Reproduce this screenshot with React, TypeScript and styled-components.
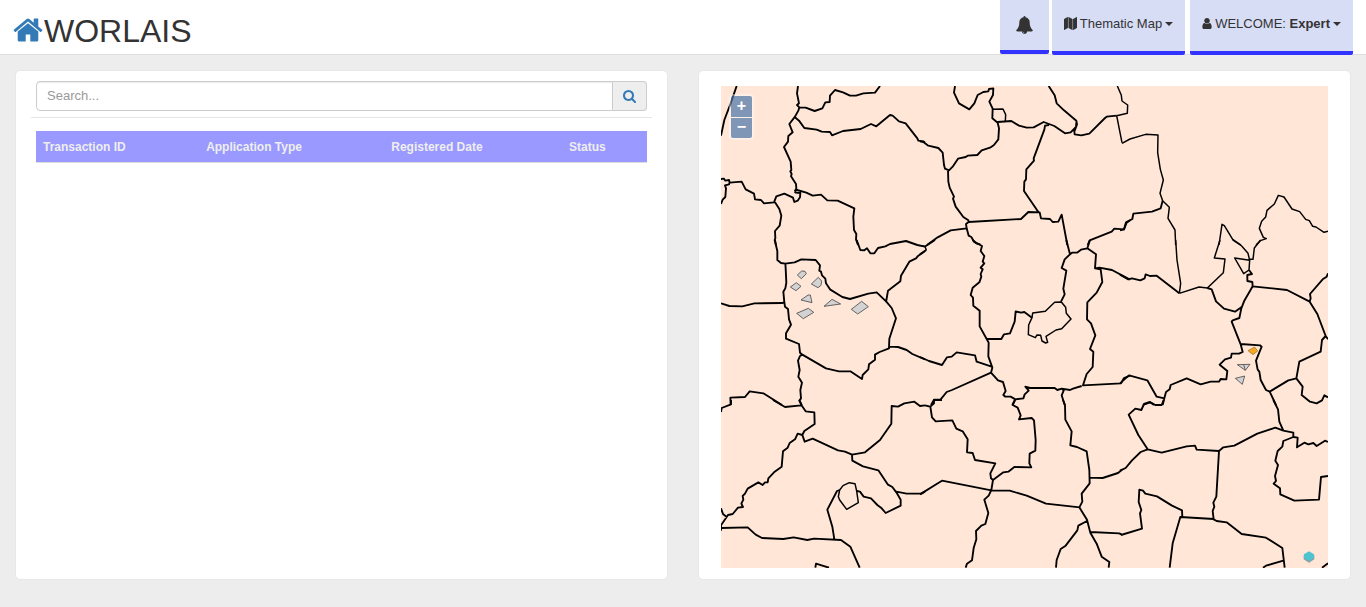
import React from "react";
import styled, { createGlobalStyle } from "styled-components";

const GlobalStyle = createGlobalStyle`
  *, *::before, *::after { box-sizing: border-box; }
  body {
    margin: 0;
    background: #ededed;
    color: #333;
    font: 13px/18px "Liberation Sans", Arial, Helvetica, sans-serif;
  }
  button, input { font: inherit; color: inherit; }
`;

const Header = styled.header`
  display: flex;
  align-items: flex-start;
  justify-content: space-between;
  height: 55px;
  padding: 0 13px;
  background: #fff;
  box-shadow: inset 0 -1px #dedede;
`;

const Brand = styled.h1`
  display: flex;
  gap: 1px;
  margin: 0;
  padding-top: 14px;
  font-size: 32px;
  line-height: 34px;
  font-weight: 400;
`;

const HomeLink = styled.a`
  display: block;
  height: 32px;
  color: #337ab7;
`;

const Icon = styled.svg`
  display: block;
  flex: none;
  fill: currentColor;
`;

const Nav = styled.nav`
  display: flex;
  align-items: flex-start;
`;

const NavButton = styled.button<{ $gap: number; $compact?: boolean }>`
  display: flex;
  align-items: flex-start;
  gap: 3px;
  height: ${(p) => (p.$compact ? 54 : 55)}px;
  margin: 0 0 0 ${(p) => p.$gap}px;
  padding: ${(p) => (p.$compact ? "16px" : "15px 12px")};
  border: 0;
  border-bottom: 4px solid #3333ff;
  border-radius: 0 0 2px 2px;
  background: #d8ddf6;
  white-space: nowrap;
  cursor: pointer;

  ${Icon} {
    margin-top: ${(p) => (p.$compact ? 0 : 2)}px;
  }
`;

const Caret = styled.span`
  margin-top: 7px;
  border: 4px solid transparent;
  border-top-color: currentColor;
  border-bottom: 0;
`;

const Main = styled.main`
  display: grid;
  grid-template-columns: minmax(0, 1fr) minmax(0, 1fr);
  gap: 30px;
  padding: 15px 15px 27px;
`;

const Panel = styled.section<{ $map?: boolean }>`
  padding: ${(p) => (p.$map ? "15px 22px 11px" : "10px 15px")};
  border: 1px solid #e7e7ec;
  border-radius: 5px;
  background: #fff;
`;

const SearchForm = styled.form`
  display: flex;
  margin: 0;
  padding: 0 5px 6px;
  border-bottom: 1px solid #e7e7ea;
`;

const SearchInput = styled.input`
  flex: 1;
  min-width: 0;
  height: 30px;
  padding: 0 10px 2px;
  border: 1px solid #ccc;
  border-radius: 4px 0 0 4px;
  box-shadow: inset 0 1px 1px rgba(0, 0, 0, 0.08);
  outline: 0;
  &::placeholder { color: #999; opacity: 1; }
`;

const SearchButton = styled.button`
  display: flex;
  align-items: center;
  justify-content: center;
  width: 34px;
  height: 30px;
  padding: 0;
  border: 1px solid #ccc;
  border-left: 0;
  border-radius: 0 4px 4px 0;
  background: #eee;
  color: #337ab7;
  cursor: pointer;
`;

const TableWrap = styled.div`
  padding: 13px 5px 0;
`;

const Table = styled.table`
  width: 100%;
  table-layout: fixed;
  border-collapse: separate;
  border-spacing: 0;
  font-size: 12px;
`;

const HeadCell = styled.th<{ $width?: string }>`
  width: ${(p) => p.$width || "auto"};
  height: 32px;
  padding: 0 7px;
  border-bottom: 1px solid #ddd;
  background: #9999ff;
  background-clip: padding-box;
  color: #eee;
  font-weight: 700;
  text-align: left;
`;

const MapView = styled.div`
  position: relative;
  background: #ffe6d7;
`;

const MapCanvas = styled.svg`
  display: block;
  width: 100%;
  height: auto;
`;

const ZoomBox = styled.div`
  position: absolute;
  top: 8px;
  left: 8px;
  display: flex;
  flex-direction: column;
  gap: 1px;
  padding: 2px;
  border-radius: 4px;
  background: rgba(255, 255, 255, 0.4);
`;

const ZoomButton = styled.button<{ $last?: boolean }>`
  width: 21px;
  height: ${(p) => (p.$last ? 20 : 21)}px;
  padding: 0 0 2px;
  border: 0;
  border-radius: ${(p) => (p.$last ? "0 0 2px 2px" : "2px 2px 0 0")};
  background: rgba(0, 60, 136, 0.5);
  color: #fff;
  font-size: 16px;
  line-height: 18px;
  font-weight: 700;
  cursor: pointer;
`;

type GlyphProps = { box: string; width: number; height: number; d: string };

const Glyph = ({ box, width, height, d }: GlyphProps) => (
  <Icon viewBox={box} width={width} height={height} aria-hidden="true">
    <path d={d} />
  </Icon>
);

const glyphs = {
  home: "M1472 992v480q0 26-19 45t-45 19h-384v-384h-256v384h-384q-26 0-45-19t-19-45v-480q0-1 .5-3t.5-3l575-474 575 474q1 2 1 6zm223-69l-62 74q-8 9-21 11h-3q-13 0-21-7l-692-577-692 577q-12 8-24 7-13-2-21-11l-62-74q-8-10-7-23.5t11-21.5l719-599q32-26 76-26t76 26l244 204v-195q0-14 9-23t23-9h192q14 0 23 9t9 23v408l219 182q10 8 11 21.5t-7 23.5z",
  bell: "M912 1696q0-16-16-16-59 0-101.5-42.5t-42.5-101.5q0-16-16-16t-16 16q0 73 51.5 124.5t124.5 51.5q16 0 16-16zm816-288q0 52-38 90t-90 38h-448q0 106-75 181t-181 75-181-75-75-181h-448q-52 0-90-38t-38-90q50-42 91-88t85-119.5 74.5-158.5 50-206 19.5-260q0-152 117-282.5t307-158.5q-8-19-8-39 0-40 28-68t68-28 68 28 28 68q0 20-8 39 190 28 307 158.5t117 282.5q0 139 19.5 260t50 206 74.5 158.5 85 119.5 91 88z",
  search: "M1216 832q0-185-131.5-316.5t-316.5-131.5-316.5 131.5-131.5 316.5 131.5 316.5 316.5 131.5 316.5-131.5 131.5-316.5zm512 832q0 52-38 90t-90 38q-54 0-90-38l-343-342q-179 124-399 124-143 0-273.5-55.5t-225-150-150-225-55.5-273.5 55.5-273.5 150-225 225-150 273.5-55.5 273.5 55.5 225 150 150 225 55.5 273.5q0 220-124 399l343 343q37 37 37 90z",
  user: "M1536 1399q0 109-62.5 187t-150.5 78h-854q-88 0-150.5-78t-62.5-187q0-85 8.5-160.5t31.5-152 58.5-131 94-89 134.5-34.5q131 128 313 128t313-128q76 0 134.5 34.5t94 89 58.5 131 31.5 152 8.5 160.5zm-256-887q0 159-112.5 271.5t-271.5 112.5-271.5-112.5-112.5-271.5 112.5-271.5 271.5-112.5 271.5 112.5 112.5 271.5z",
  map: "M512 0q13 0 22.5 9.5t9.5 22.5v1472q0 20-17 28l-480 256q-7 4-15 4-13 0-22.5-9.5t-9.5-22.5v-1472q0-20 17-28l480-256q7-4 15-4zm1248 0q13 0 22.5 9.5t9.5 22.5v1472q0 20-17 28l-480 256q-7 4-15 4-13 0-22.5-9.5t-9.5-22.5v-1472q0-20 17-28l480-256q7-4 15-4zm-1120 0q8 0 14 3l512 256q18 10 18 29v1472q0 13-9.5 22.5t-22.5 9.5q-8 0-14-3l-512-256q-18-10-18-29v-1472q0-13 9.5-22.5t22.5-9.5z",
};

type Tile = { x: number; y: number; borders: string[]; thin?: string[] };

// Parish borders by map tile; tile coordinates are three units to the pixel.
const tiles: Tile[] = [
  {
    x: -6, y: -6,
    borders: [
      "M65 18L47 70L28 120L18 167",
      "M249 18L246 40L252 70L246 75L253 82L250 92L240 110L223 132L233 157L220 168L219 185L207 201L227 245L229 270L226 274L230 282L228 289L243 312L244 325L239 334",
      "M253 82L272 83L299 93L322 85L331 67L344 66L345 47L360 30L384 37L405 47L423 47L445 40L480 38L495 18",
      "M240 112L252 122L268 144L305 149L320 155L345 156L351 166L384 153L437 147L468 132L484 139L525 105L533 107L552 124L572 130L607 175L610 182L625 184L630 188",
      "M239 334L246 330L274 338L293 347L318 344L337 361L368 362L418 385L415 410L417 450L424 462L423 478L429 495",
      "M239 334L242 338L256 339L255 352L248 362L238 366L234 353L208 341L184 349L177 367L147 370L138 360L120 358L117 341L92 328L80 305L44 308L42 300L31 302L27 296L18 297",
      "M44 308L42 313L30 316L33 325L31 351L23 359L18 372",
      "M180 367L193 387L199 407L194 437L180 453L181 475L179 480L183 495",
    ],
  },
  {
    x: 199, y: -6,
    borders: [
      "M105 18L102 38L117 70L148 88L163 70L173 45L190 36L205 34L207 27L220 25L219 45L208 65L218 86L217 115L233 128L237 145L235 178L222 195L210 203L185 211L172 225L143 227L137 231L114 236L98 260L87 271L75 266L72 255L68 218L55 204L25 197L10 186L0 184",
      "M233 126L274 123L297 137L320 143L341 142L371 126L403 138L435 160L452 157L468 141L469 128",
      "M386 18L404 46L410 70L432 91L469 122L471 133L463 155L464 163L484 166L508 161L555 114L560 110L590 107",
      "M387 135L375 137L373 149L341 235L342 242L319 268L318 298L313 305L312 333L355 396",
      "M84 271L85 305L89 323L102 350L99 356L107 380L130 411L145 421L146 426L303 417L325 396L359 397L363 415L390 417L398 426L415 425L425 404L442 495",
      "M146 426L138 432L140 445L92 451L53 472L21 495",
      "M140 445L146 467L154 471L162 485L171 491L181 493",
      "M503 495L509 481L575 455L583 446L612 448L620 428L630 421",
    ],
    thin: [
      "M218 88L249 87L257 104L256 124",
      "M590 107L622 100L623 75L606 63L604 46L592 18",
      "M590 107L606 188",
    ],
  },
  {
    x: 399, y: -6,
    borders: ["M128 362L122 385L96 395L40 401L37 417L18 427L12 448L0 451"],
    thin: [
      "M6 190L30 177L77 163L114 165L113 218L121 268L130 300L120 340L128 362L148 382L144 415L165 450L167 495",
      "M297 495L306 433L313 437L338 478L363 495",
      "M408 495L421 482L439 476L430 472L418 445L425 424L437 411L441 391L463 372L475 346L492 351L516 387L539 395L557 418L568 422L578 439L588 441L612 457L624 454",
    ],
  },
  {
    x: -6, y: 154,
    borders: [
      "M180 0L182 12L187 33L187 60L198 69L211 71L239 67L259 58L302 60L315 76L313 92L318 95L321 106L331 116L333 130L346 149L382 171L405 177L460 161L485 157L514 185L530 204L543 235L523 296L522 323",
      "M425 0L436 30L448 31L456 25L466 40L478 40L489 24L511 19L525 12L573 3L607 15L630 20",
      "M630 33L608 49L603 55L583 65L558 107L556 124L519 152L513 187",
      "M211 71L212 85L214 128L211 145L205 155L208 187L210 200L219 207L222 238L228 254L213 280L213 296L252 312L255 338L262 344L333 385L372 394L406 394L441 417L443 405L460 388L462 373L480 359L480 344L494 336L522 325L524 320L549 321L575 330L592 342L630 358",
      "M18 190L43 198L82 199L118 190L202 189L208 186",
      "M262 344L255 348L249 362L254 390L250 410L261 428L256 450L258 475L253 482L260 495",
      "M47 495L46 473L90 471L104 454L145 460L201 495",
    ],
  },
  {
    x: 199, y: 154,
    borders: [
      "M0 43L19 30M14 20L45 0",
      "M158 0L168 8L186 18L182 33L193 48L188 65L193 70L182 83L188 88L182 102L184 110L178 127L158 143L152 165L159 173L160 197L179 212L179 259L200 297L206 308L205 349L217 383L213 398",
      "M200 297L244 297L252 283L270 280L284 245L287 214L303 218L313 216L336 233",
      "M439 0L450 43L434 58L425 84L439 92L430 146L434 163L423 185",
      "M450 43L456 38L471 38L483 29L502 25L510 0",
      "M502 25L528 43L525 85L542 88L547 126L530 158L502 187L501 238L513 250L526 286L510 327L520 335L518 381L500 402L489 436L603 430L612 414L630 407",
      "M525 85L538 83L576 90L630 119",
      "M0 351L27 363L66 375L81 352L95 350L110 337L165 346L170 365L215 380",
      "M213 398L96 450L80 456L62 478L42 479L33 495",
      "M213 398L234 421L249 426L257 453L250 465L256 470L272 470L286 478L310 475L314 463L326 452L316 440L330 444L404 444L412 450L425 446L450 450L459 446L485 438",
      "M286 478L277 495",
      "M425 446L431 452L425 466L434 495",
    ],
    thin: [
      "M5 17L15 20L19 30",
      "M336 233L338 219L376 214L404 187L424 186L437 202L439 220L453 237L425 266L408 270L378 289L383 307L377 309L366 303L362 286L351 285L346 293L325 284L326 255Z",
    ],
  },
  {
    x: 399, y: 154,
    borders: [
      "M0 104L25 118L36 115L61 121L74 115L77 103L90 108L110 107L178 160",
      "M262 144L275 148L288 184L312 206L345 215L366 200",
      "M387 90L396 102L382 105L382 123L397 126L398 139L373 182L364 205L358 234L338 241L335 245L362 313L368 336L357 341L335 341L333 353L315 358L299 374L322 393L319 418L302 417L297 425L272 425L242 433L200 415L152 435L149 448L138 456L133 475L110 470L82 421L27 406L0 430",
      "M398 139L501 150L569 185L572 175L570 162L608 118L620 110L624 100",
      "M569 185L592 222L617 288L624 298",
      "M617 288L606 300L602 335L538 365L529 415L548 440L545 465L570 485L590 490L606 481L613 466L624 472",
      "M529 415L505 421L449 455L438 450L422 420L418 395L413 389L408 362L425 320L420 316L362 312",
      "M449 455L468 495",
      "M133 475L128 495",
      "M69 495L90 487L102 495",
    ],
    thin: [
      "M178 160L237 141L262 144L310 98L315 57L283 54L300 0",
      "M167 0L171 60L182 130L178 160",
      "M338 0L365 18L384 40L389 61L344 54L371 101L387 90L389 61",
      "M389 57L399 58L403 24L422 0",
    ],
  },
  {
    x: -6, y: 314,
    borders: [
      "M48 0L48 13L20 24L18 36",
      "M174 0L210 21L258 16",
      "M253 0L261 18L272 34L298 37L299 72L268 93L262 105",
      "M262 105L248 101L240 118L224 129L218 143L204 154L200 200L177 217L160 235L158 247L150 247L143 255L130 247L98 266L90 281L83 288L85 299L79 311L84 321L69 323L53 342L39 345L18 376V392",
      "M18 325L24 342L36 352",
      "M262 105L269 125L293 116L369 151L390 155L411 164L450 157L495 120L529 71L530 18L549 20L568 10L598 5L615 18L630 16",
      "M411 164L412 182L444 199L490 211L519 254L532 261L544 277L557 299L557 317L512 339L500 325L487 315L468 295L446 290L435 275L425 273",
      "M544 275L575 281L619 281L630 275",
      "M374 270L366 273L337 329L352 380L358 418",
      "M18 384L98 382L122 404L141 414L205 417L236 412L277 420L297 416L378 420L406 440L434 503",
      "M301 503L303 491L342 503",
    ],
    thin: ["M403 248L420 251L425 273L430 308L395 328L374 300L370 290L374 270L384 257Z"],
  },
  {
    x: 199, y: 314,
    borders: [
      "M66 0H42V10L31 20L36 52L47 64L97 61L109 86L128 94L143 118L141 157L158 159L165 180L226 190L211 220L213 235L219 240L214 270L206 287L193 299L205 339L196 372L184 377L168 393L169 418L161 444L156 481L141 491L137 503",
      "M15 16L30 20",
      "M219 240L250 217L265 215L283 201L334 202L328 190L329 161L346 152L347 120L342 61L335 54L297 58L302 46L293 23L278 15L285 0",
      "M0 283L50 252L66 242L214 271L269 272L320 287L378 311L479 322",
      "M429 0L435 15L436 59L455 94L451 136L471 141L500 154L508 210L509 250L485 281L487 305L478 322L501 359L511 398L530 431L545 470L568 486L566 503",
      "M509 233L548 234L594 219L606 209",
      "M501 363L475 377L472 391L437 437L422 447L410 480L408 503",
      "M511 396L598 400L605 404",
    ],
  },
  {
    x: 399, y: 314,
    borders: [
      "M131 0L125 15L106 15L90 6L72 12L64 30L46 26L26 44L55 105L83 148L125 158L200 139L225 137L230 149L297 153L310 142L343 137L412 101L466 83L490 92L520 98L520 111L490 123L487 140L473 153L466 182L474 195L465 228L468 243L461 251L480 265L481 283L523 302L597 299L603 231L624 228",
      "M520 111L533 113L531 142L553 128L565 133L580 129L590 138L615 122L624 126",
      "M83 148L62 156L36 181L17 204L0 212",
      "M460 0L474 28L478 65L490 92",
      "M297 153L289 290L280 308L283 320L278 333L281 358L290 363L320 367L365 402L438 413L487 444L494 503",
      "M281 357L181 351L158 430L149 503",
      "M3 405L66 386L60 340L64 330L56 306L58 269L69 272L76 281L111 289L156 317L186 331L187 351",
      "M429 503L438 497L490 482",
      "M606 503L624 490",
    ],
  },
];

const westParcels = [
  "247,105 260,93 270,94 274,101 259,116",
  "226,141 244,128 258,139 243,152",
  "289,132 310,112 320,123 318,136 309,143",
  "258,180 279,165 286,165 291,188",
  "327,199 351,178 377,192",
  "245,220 280,205 296,217 265,236",
  "409,208 440,184 460,200 428,222",
];

const eastParcels = ["352,374 390,373 376,391", "346,415 374,408 367,433"];

const toTile = (x: number, y: number) => `translate(${x} ${y}) scale(${1 / 3})`;

const columns = [
  { label: "Transaction ID", width: "26.7%" },
  { label: "Application Type", width: "30.3%" },
  { label: "Registered Date", width: "29.1%" },
  { label: "Status" },
];

export default function App() {
  return (
    <>
      <GlobalStyle />
      <Header>
        <Brand>
          <HomeLink href="#" aria-label="Home">
            <Glyph box="64 0 1664 1792" width={30} height={32} d={glyphs.home} />
          </HomeLink>
          WORLAIS
        </Brand>
        <Nav>
          <NavButton $gap={0} $compact aria-label="Notifications">
            <Glyph box="64 0 1664 1792" width={17} height={18} d={glyphs.bell} />
          </NavButton>
          <NavButton $gap={3} aria-haspopup="menu">
            <Glyph box="0 0 1792 1792" width={13} height={13} d={glyphs.map} />
            <span>Thematic Map</span>
            <Caret />
          </NavButton>
          <NavButton $gap={5} aria-haspopup="menu">
            <Glyph box="256 0 1280 1792" width={10} height={13} d={glyphs.user} />
            <span>
              WELCOME: <b>Expert</b>
            </span>
            <Caret />
          </NavButton>
        </Nav>
      </Header>
      <Main>
        <Panel>
          <SearchForm role="search" onSubmit={(e) => e.preventDefault()}>
            <SearchInput type="text" placeholder="Search..." aria-label="Search" />
            <SearchButton type="submit" aria-label="Run search">
              <Glyph box="64 128 1664 1664" width={13} height={13} d={glyphs.search} />
            </SearchButton>
          </SearchForm>
          <TableWrap>
            <Table>
              <thead>
                <tr>
                  {columns.map((c) => (
                    <HeadCell key={c.label} scope="col" $width={c.width}>
                      {c.label}
                    </HeadCell>
                  ))}
                </tr>
              </thead>
            </Table>
          </TableWrap>
        </Panel>
        <Panel $map>
          <MapView>
            <MapCanvas viewBox="0 0 607 482" role="img" aria-label="Parish map">
              <g fill="none" stroke="#000" strokeLinejoin="round">
                {tiles.map((t) => (
                  <g key={`${t.x},${t.y}`} transform={toTile(t.x, t.y)}>
                    <path d={t.borders.join("")} strokeWidth="5.6" />
                    {t.thin && <path d={t.thin.join("")} strokeWidth="4.4" />}
                  </g>
                ))}
              </g>
              <g transform={toTile(-6, 154)} fill="#d3d3d3" stroke="#444" strokeWidth="2.4">
                {westParcels.map((p) => (
                  <polygon key={p} points={p} />
                ))}
              </g>
              <g transform={toTile(399, 154)} fill="#d3d3d3" stroke="#444" strokeWidth="2.4">
                {eastParcels.map((p) => (
                  <polygon key={p} points={p} />
                ))}
                <path d="M371 374L376 391" />
                <polygon points="384,332 404,321 413,333 399,344" fill="#f5a623" stroke="#a87a2c" />
              </g>
              <g transform={toTile(399, 314)}>
                <polygon points="567,457 583,466 583,478 567,488 551,478 551,466" fill="#8f9c9c" />
                <polygon points="567,454 582,463 582,475 567,484 552,475 552,463" fill="#4fc3cf" />
              </g>
            </MapCanvas>
            <ZoomBox>
              <ZoomButton aria-label="Zoom in">+</ZoomButton>
              <ZoomButton $last aria-label="Zoom out">−</ZoomButton>
            </ZoomBox>
          </MapView>
        </Panel>
      </Main>
    </>
  );
}
